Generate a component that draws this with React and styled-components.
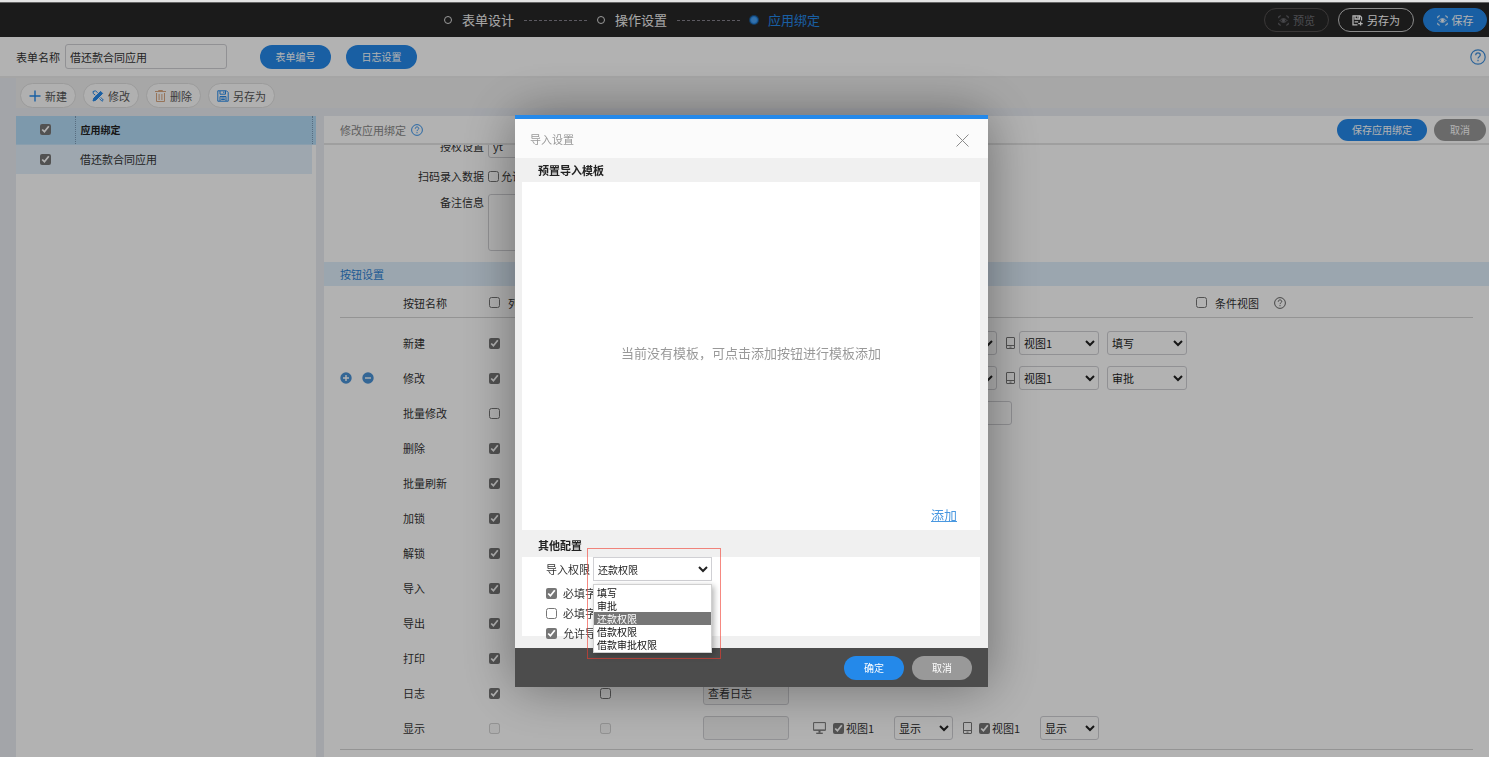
import React from "react";
import styled, { createGlobalStyle, css } from "styled-components";

const buttonRows = [
  { name: "新建", checked: true, views: "填写" },
  { name: "修改", checked: true, views: "审批", tools: true },
  { name: "批量修改", checked: false, wide: true },
  { name: "删除", checked: true },
  { name: "批量刷新", checked: true },
  { name: "加锁", checked: true },
  { name: "解锁", checked: true },
  { name: "导入", checked: true },
  { name: "导出", checked: true },
  { name: "打印", checked: true },
  { name: "日志", checked: true, second: true, title: "查看日志" },
  { name: "显示", checked: false, second: true, title: "", disabled: true, show: true },
];

const authOptions = ["填写", "审批", "还款权限", "借款权限", "借款审批权限"];

export default function App() {
  return (
    <>
      <GlobalStyle />
      <Page>
        <TopStrip />
        <Header>
          <Steps>
            <Step>
              <Dot />
              表单设计
            </Step>
            <Dashes />
            <Step>
              <Dot />
              操作设置
            </Step>
            <Dashes />
            <Step $active>
              <Dot $active />
              应用绑定
            </Step>
          </Steps>
          <HeaderButtons>
            <HeaderButton $width="65px" $kind="dim">
              <FocusIcon />
              预览
            </HeaderButton>
            <HeaderButton $width="76px" $kind="line">
              <SaveAsIcon />
              另存为
            </HeaderButton>
            <HeaderButton $width="64px" $kind="blue">
              <FocusIcon />
              保存
            </HeaderButton>
          </HeaderButtons>
        </Header>

        <FormBar>
          <label htmlFor="form-name">表单名称</label>
          <NameInput id="form-name" defaultValue="借还款合同应用" />
          <Pill $width="71px">表单编号</Pill>
          <Pill $width="71px">日志设置</Pill>
          <BarHelp>
            <HelpIcon size={16} color="#3f8fdc" />
          </BarHelp>
        </FormBar>

        <Toolbar>
          <ToolButton>
            <PlusIcon />
            新建
          </ToolButton>
          <ToolButton>
            <EditIcon />
            修改
          </ToolButton>
          <ToolButton>
            <TrashIcon />
            删除
          </ToolButton>
          <ToolButton>
            <FloppyIcon />
            另存为
          </ToolButton>
        </Toolbar>

        <Main>
          <ListPanel>
            <ListTable>
              <thead>
                <tr>
                  <th>
                    <Check type="checkbox" defaultChecked aria-label="全选" />
                  </th>
                  <th>应用绑定</th>
                  <th></th>
                </tr>
              </thead>
              <tbody>
                <tr>
                  <td>
                    <Check type="checkbox" defaultChecked aria-label="借还款合同应用" />
                  </td>
                  <td>借还款合同应用</td>
                </tr>
              </tbody>
            </ListTable>
          </ListPanel>

          <Detail>
            <DetailHeader>
              <span>修改应用绑定</span>
              <HelpIcon size={12} color="#2489ea" />
              <DetailButtons>
                <Pill $width="90px" $low>
                  保存应用绑定
                </Pill>
                <Pill $width="52px" $low $gray>
                  取消
                </Pill>
              </DetailButtons>
            </DetailHeader>

            <DetailBody>
              <Fields>
                <Field>
                  <label htmlFor="auth">授权设置</label>
                  <TextBox id="auth" $width="240px" defaultValue="yt" />
                </Field>
                <Field>
                  <span>扫码录入数据</span>
                  <CheckLabel>
                    <Check type="checkbox" />
                    允许
                  </CheckLabel>
                </Field>
                <Field $top>
                  <label htmlFor="remark">备注信息</label>
                  <Remark id="remark" />
                </Field>
              </Fields>

              <SectionBar>按钮设置</SectionBar>

              <ButtonTable>
                <colgroup>
                  <Col $width="63px" />
                  <Col $width="86px" />
                  <Col $width="111px" />
                  <Col $width="103px" />
                  <Col $width="110px" />
                  <Col $width="383px" />
                  <Col />
                </colgroup>
                <thead>
                  <tr>
                    <th></th>
                    <th>按钮名称</th>
                    <th>
                      <CheckLabel $wide>
                        <Check type="checkbox" />
                        列表
                      </CheckLabel>
                    </th>
                    <th></th>
                    <th></th>
                    <th></th>
                    <th>
                      <Condition>
                        <CheckLabel $wide>
                          <Check type="checkbox" />
                          条件视图
                        </CheckLabel>
                        <HelpIcon size={12} color="#555" />
                      </Condition>
                    </th>
                  </tr>
                </thead>
                <tbody>
                  {buttonRows.map((row) => (
                    <tr key={row.name}>
                      <td>
                        {row.tools && (
                          <RowTools>
                            <RoundButton aria-label="增加">
                              <RoundIcon plus />
                            </RoundButton>
                            <RoundButton aria-label="移除">
                              <RoundIcon />
                            </RoundButton>
                          </RowTools>
                        )}
                      </td>
                      <td>{row.name}</td>
                      <td>
                        <Check
                          type="checkbox"
                          aria-label={row.name}
                          defaultChecked={row.checked}
                          disabled={row.disabled}
                        />
                      </td>
                      <td>
                        {row.second && (
                          <Check type="checkbox" aria-label={row.name} disabled={row.disabled} />
                        )}
                      </td>
                      <td>
                        {row.second && (
                          <TextBox
                            $width="86px"
                            $off
                            aria-label={row.name}
                            defaultValue={row.title}
                          />
                        )}
                      </td>
                      <td>
                        {row.views && <Views auth={row.views} />}
                        {row.wide && <TextBox $width="199px" aria-label={row.name} />}
                        {row.show && <ShowViews />}
                      </td>
                      <td></td>
                    </tr>
                  ))}
                </tbody>
              </ButtonTable>
            </DetailBody>
          </Detail>
        </Main>
      </Page>

      <Mask>
        <Modal role="dialog" aria-label="导入设置">
          <ModalHeader>
            导入设置
            <CloseButton aria-label="关闭">
              <svg width="13" height="13" viewBox="0 0 13 13" stroke="#8c8c8c" fill="none">
                <path d="M.5 .5l12 12M12.5 .5l-12 12" />
              </svg>
            </CloseButton>
          </ModalHeader>
          <GroupTitle>预置导入模板</GroupTitle>
          <TemplateBox>
            <Empty>当前没有模板，可点击添加按钮进行模板添加</Empty>
            <AddLink href="#add">添加</AddLink>
          </TemplateBox>
          <GroupTitle $tall>其他配置</GroupTitle>
          <ConfigBox>
            <AuthRow>
              <label htmlFor="import-auth">导入权限</label>
              <AuthSelect>
                <Select id="import-auth" $width="119px" $small defaultValue="还款权限">
                  {authOptions.map((o) => (
                    <option key={o}>{o}</option>
                  ))}
                </Select>
                <Marker />
                <Options>
                  {authOptions.map((o) => (
                    <Option key={o} $on={o === "还款权限"}>
                      {o}
                    </Option>
                  ))}
                </Options>
              </AuthSelect>
            </AuthRow>
            <ConfigCheck>
              <Check type="checkbox" defaultChecked />
              必填字
            </ConfigCheck>
            <ConfigCheck>
              <Check type="checkbox" />
              必填字
            </ConfigCheck>
            <ConfigCheck>
              <Check type="checkbox" defaultChecked />
              允许导
            </ConfigCheck>
          </ConfigBox>
          <ModalFooter>
            <Pill $width="60px">确定</Pill>
            <Pill $width="60px" $gray>
              取消
            </Pill>
          </ModalFooter>
        </Modal>
      </Mask>
    </>
  );
}

function Views({ auth }) {
  return (
    <ViewRow>
      <MonitorIcon />
      <Select $width="80px" aria-label="电脑视图" defaultValue="视图1">
        <option>视图1</option>
      </Select>
      <Select $width="80px" aria-label="电脑权限" defaultValue={auth}>
        <option>{auth}</option>
      </Select>
      <PhoneIcon />
      <Select $width="80px" aria-label="手机视图" defaultValue="视图1">
        <option>视图1</option>
      </Select>
      <Select $width="80px" aria-label="手机权限" defaultValue={auth}>
        <option>{auth}</option>
      </Select>
    </ViewRow>
  );
}

function ShowViews() {
  return (
    <ShowRow>
      <MonitorIcon />
      <ShowLabel>
        <Check type="checkbox" defaultChecked />
        视图1
      </ShowLabel>
      <Select $width="59px" aria-label="电脑显示">
        <option>显示</option>
      </Select>
      <PhoneIcon />
      <ShowLabel>
        <Check type="checkbox" defaultChecked />
        视图1
      </ShowLabel>
      <Select $width="59px" aria-label="手机显示">
        <option>显示</option>
      </Select>
    </ShowRow>
  );
}

function HelpIcon({ size, color }) {
  return (
    <svg width={size} height={size} viewBox="0 0 16 16" fill="none" stroke={color} strokeWidth="1.2">
      <circle cx="8" cy="8" r="7.2" />
      <path d="M5.7 6.3c0-1.5 1-2.4 2.3-2.4s2.3.9 2.3 2.1c0 1.6-2.3 1.8-2.3 3.5" />
      <path d="M8 10.8v1.5" />
    </svg>
  );
}

function FocusIcon() {
  return (
    <svg width="11" height="11" viewBox="0 0 11 11" fill="none" stroke="currentColor">
      <path d="M.8 3.2V1.5L2.8 .8M8.2 .8l2 .7v1.7M10.2 7.8v1.7l-2 .7M2.8 10.2l-2-.7V7.8" />
      <path d="M2 5.5c1.8-2.4 5.2-2.4 7 0-1.8 2.4-5.2 2.4-7 0z" />
      <circle cx="5.5" cy="5.5" r="1.2" fill="currentColor" />
    </svg>
  );
}

function SaveAsIcon() {
  return (
    <svg width="11" height="11" viewBox="0 0 11 11" fill="none" stroke="currentColor" strokeWidth="1.3">
      <path d="M5.5 9.8H1V.8h7l1.5 1.4v3.3" />
      <path d="M3 .8v3.2h4.4V.8M5.8 1.2v1.6M2.6 6.8h3.6" />
      <path d="M6.2 8.6h4.5M8.6 6.6v4" />
    </svg>
  );
}

function PlusIcon() {
  return (
    <svg width="12" height="12" viewBox="0 0 12 12" stroke="#2489ea" strokeWidth="1.4">
      <path d="M6 .5v11M.5 6h11" />
    </svg>
  );
}

function EditIcon() {
  return (
    <svg width="12" height="12" viewBox="0 0 12 12" fill="none" stroke="#2489ea">
      <path d="M1 11l.8-2.8L8.6 1.4l2 2L3.8 10.2z" fill="#2489ea" />
      <path d="M1 1.5l2.6-.7 2 2M1 1.5l.3 2 2 1.7M7.5 8.5l2.5 2.8 1.3-1.2-2.6-2.8" />
    </svg>
  );
}

function TrashIcon() {
  return (
    <svg width="11" height="12" viewBox="0 0 11 12" fill="none" stroke="#d8a680">
      <path d="M0 1.5h11M3.5 1.5v-1h4v1M1.5 3v8.5h8V3M4.1 4v6M6.9 4v6" />
    </svg>
  );
}

function FloppyIcon() {
  return (
    <svg width="12" height="12" viewBox="0 0 12 12" fill="none" stroke="#2489ea">
      <path d="M1 .8h8.5L11.2 2.5v8.7H.8V.8z" />
      <path d="M3 1v3.2h5.5V1M6.8 1.5v1.6M3 11V6.5h6V11M4.2 8h3.6M4.2 9.5h3.6" />
    </svg>
  );
}

function RoundIcon({ plus }) {
  return (
    <svg width="12" height="12" viewBox="0 0 12 12">
      <circle cx="6" cy="6" r="5.7" fill="#4a92d6" />
      <path d={plus ? "M3 6h6M6 3v6" : "M3 6h6"} stroke="#fff" strokeWidth="1.4" />
    </svg>
  );
}

function MonitorIcon() {
  return (
    <svg width="13" height="12" viewBox="0 0 13 12" fill="none" stroke="#777">
      <path d="M.6 .6h11.8v7.8H.6z" />
      <path d="M1 7.6h11" stroke="#aaa" />
      <path d="M6.5 8.4v2.4" strokeWidth="2" />
      <path d="M3.2 11.3h6.6" strokeWidth="1.3" />
    </svg>
  );
}

function PhoneIcon() {
  return (
    <svg width="9" height="12" viewBox="0 0 9 12" fill="none" stroke="#777">
      <rect x=".5" y=".5" width="8" height="11" rx=".5" />
      <path d="M.7 8.5h7.6M3.5 10.1h2" />
    </svg>
  );
}

const GlobalStyle = createGlobalStyle`
  * {
    box-sizing: border-box;
  }
  body {
    margin: 0;
    background: #eaedf3;
    font-family: "Noto Sans CJK SC", "Noto Sans", sans-serif;
    font-size: 11px;
    line-height: 16px;
    color: #333;
  }
  button, input, select, textarea {
    font-family: inherit;
    font-size: 11px;
    color: #333;
  }
  svg {
    display: block;
    flex: none;
  }
`;

const Page = styled.div`
  display: flex;
  flex-direction: column;
  height: 100vh;
  overflow: hidden;
`;

const TopStrip = styled.div`
  position: relative;
  z-index: 2;
  flex: none;
  height: 3px;
  background: #e4e4e4;
  border-bottom: 1px solid #666;
`;

const Header = styled.header`
  display: flex;
  flex: none;
  align-items: center;
  height: 34px;
  padding-right: 2px;
  background: #282828;
`;

const Steps = styled.div`
  display: flex;
  flex: 1;
  align-items: center;
  justify-content: center;
  gap: 10px;
`;

const Step = styled.div`
  display: flex;
  align-items: center;
  gap: 10px;
  font-size: 13px;
  line-height: 20px;
  color: ${(p) => (p.$active ? "#2489ea" : "#f0f0f0")};
`;

const Dot = styled.i`
  width: 8px;
  height: 8px;
  border: 1px solid ${(p) => (p.$active ? "#2489ea" : "#ddd")};
  border-radius: 50%;
  background: ${(p) => (p.$active ? "#4ba3f5" : "transparent")};
  box-shadow: ${(p) => (p.$active ? "0 0 0 1px #1c5488" : "none")};
`;

const Dashes = styled.i`
  width: 63px;
  border-top: 1px dashed #84818c;
`;

const HeaderButtons = styled.div`
  display: flex;
  gap: 9px;
`;

const kinds = {
  dim: css`
    border: 1px solid #545050;
    background: transparent;
    color: #6e6e74;
  `,
  line: css`
    border: 1px solid #c8c8c8;
    background: transparent;
    color: #fff;
  `,
  blue: css`
    border: 1px solid #2489ea;
    background: #2489ea;
    color: #fff;
  `,
};

const HeaderButton = styled.button`
  display: flex;
  align-items: center;
  justify-content: center;
  gap: 4px;
  width: ${(p) => p.$width};
  height: 24px;
  padding: 0;
  border-radius: 12px;
  ${(p) => kinds[p.$kind]}
`;

const FormBar = styled.div`
  display: flex;
  flex: none;
  align-items: center;
  height: 41px;
  padding: 0 3px 0 16px;
  background: #fff;
  border-bottom: 2px solid #ececec;

  > button {
    margin-right: 15px;
  }
`;

const inputBorder = css`
  border: 1px solid #d0d0d4;
  border-radius: 3px;
  background: #fff;
`;

const NameInput = styled.input`
  ${inputBorder}
  width: 162px;
  height: 25px;
  margin: 0 33px 0 5px;
  padding: 0 4px;
`;

const Pill = styled.button`
  width: ${(p) => p.$width};
  height: ${(p) => (p.$low ? "22px" : "24px")};
  padding: 0;
  border: 0;
  border-radius: 12px;
  background: ${(p) => (p.$gray ? "#999" : "#2489ea")};
  color: #fff;
  font-size: 10px;
  line-height: 16px;
`;

const BarHelp = styled.span`
  margin-left: auto;
`;

const Toolbar = styled.div`
  display: flex;
  flex: none;
  align-items: flex-end;
  gap: 7px;
  height: 30px;
  margin: 0 0 8px 16px;
  padding-left: 4px;
  background: #f0f0f0;
`;

const ToolButton = styled.button`
  display: flex;
  align-items: center;
  gap: 4px;
  height: 25px;
  padding: 0 8px;
  border: 1px solid #dedede;
  border-radius: 13px;
  background: #fcfcfc;
  color: #555;
`;

const Main = styled.main`
  display: flex;
  flex: 1;
  min-height: 0;
  gap: 8px;
  padding-left: 16px;
`;

const ListPanel = styled.section`
  flex: none;
  width: 300px;
  background: #fff;
`;

const ListTable = styled.table`
  width: 100%;
  table-layout: fixed;
  border-collapse: collapse;

  th, td {
    height: 30px;
    padding: 0 5px;
    text-align: left;
  }
  th {
    height: 28px;
    background: #b4dbf7;
    border-bottom: 1px solid #c4e2f8;
    font-size: 10px;
    color: #222;
  }
  td {
    background: #e2f0fb;
    color: #333;
  }
  th:first-child, td:first-child {
    width: 59px;
    text-align: center;
  }
  th:nth-child(2) {
    border-left: 1px dotted #7e9db8;
    border-right: 1px dotted #7e9db8;
  }
  th:last-child {
    width: 4px;
    padding: 0;
  }
`;

const Check = styled.input`
  display: block;
  flex: none;
  width: 11px;
  height: 11px;
  margin: 0;
  accent-color: #767676;

  ${ListTable} & {
    margin: 0 auto;
  }
`;

const Detail = styled.section`
  display: flex;
  flex: 1;
  flex-direction: column;
  min-width: 0;
  background: #fff;
`;

const DetailHeader = styled.div`
  display: flex;
  flex: none;
  align-items: center;
  gap: 5px;
  height: 29px;
  padding: 0 3px 0 16px;
  border-bottom: 2px solid #e4e4e4;
  color: #888;
`;

const DetailButtons = styled.div`
  display: flex;
  gap: 7px;
  margin-left: auto;
`;

const DetailBody = styled.div`
  flex: 1;
  min-height: 0;
  overflow: hidden;
`;

/* scrolled: the first fields run out above the top edge */
const Fields = styled.div`
  display: flex;
  flex-direction: column;
  justify-content: flex-end;
  gap: 6px;
  height: 117px;
  padding-bottom: 11px;
  overflow: hidden;
`;

const Field = styled.div`
  display: flex;
  flex: none;
  align-items: ${(p) => (p.$top ? "flex-start" : "center")};
  gap: 4px;
  min-height: 24px;

  > :first-child {
    width: 160px;
    text-align: right;
  }
`;

const TextBox = styled.input`
  ${inputBorder}
  display: block;
  width: ${(p) => p.$width};
  height: 24px;
  padding: 0 4px;
  background: ${(p) => (p.$off ? "#f4f4f4" : "#fff")};
`;

const Remark = styled.textarea`
  ${inputBorder}
  width: 240px;
  height: 57px;
  resize: none;
`;

const CheckLabel = styled.label`
  display: flex;
  align-items: center;
  gap: ${(p) => (p.$wide ? "8px" : "2px")};
`;

const SectionBar = styled.div`
  height: 24px;
  padding-left: 16px;
  background: #dfeefb;
  line-height: 24px;
  color: #2f83d3;
`;

const ButtonTable = styled.table`
  width: calc(100% - 32px);
  margin: 0 16px;
  table-layout: fixed;
  border-collapse: collapse;
  border-bottom: 1px solid #d4d4d4;

  th, td {
    height: 35px;
    padding: 0;
    text-align: left;
    font-weight: 400;
  }
  th {
    height: 31px;
    padding-top: 3px;
    border-bottom: 1px solid #d4d4d4;
  }
  tbody::before, tbody::after {
    content: "";
    display: block;
    height: 8px;
  }
  tbody::after {
    height: 3px;
  }
`;

const Col = styled.col`
  width: ${(p) => p.$width || "auto"};
`;

const Condition = styled.div`
  display: flex;
  align-items: center;
  gap: 15px;
`;

const RowTools = styled.div`
  display: flex;
  gap: 10px;
`;

const RoundButton = styled.button`
  padding: 0;
  border: 0;
  background: none;
`;

const Select = styled.select`
  ${inputBorder}
  width: ${(p) => p.$width};
  height: 24px;
  font-size: ${(p) => (p.$small ? "10px" : "11px")};
  color: #222;
`;

const ViewRow = styled.div`
  display: flex;
  align-items: center;
  gap: 8px;

  svg {
    margin-right: -5px;
  }
  select + svg {
    margin: 0 -4px 0 1px;
  }
`;

const ShowRow = styled.div`
  display: flex;
  align-items: center;

  select {
    margin-right: 10px;
  }
`;

const ShowLabel = styled.label`
  display: flex;
  align-items: center;
  gap: 2px;
  width: 68px;
  padding-left: 7px;
`;

const Mask = styled.div`
  position: fixed;
  inset: 0;
  z-index: 1;
  display: flex;
  align-items: flex-start;
  justify-content: center;
  padding: 115px 0 0 14px;
  background: rgba(0, 0, 0, 0.3);
`;

const Modal = styled.div`
  width: 473px;
  border-top: 4px solid #2489ea;
  background: #f0f0f0;
  box-shadow: 0 0 50px rgba(0, 0, 0, 0.4);
`;

const ModalHeader = styled.div`
  display: flex;
  align-items: center;
  justify-content: space-between;
  height: 39px;
  padding: 0 19px 0 15px;
  background: #fbfbfb;
  color: #999;
`;

const CloseButton = styled.button`
  padding: 4px 0 0;
  border: 0;
  background: none;
`;

const GroupTitle = styled.h2`
  height: ${(p) => (p.$tall ? "27px" : "24px")};
  margin: 0;
  padding: ${(p) => (p.$tall ? "3px" : "0")} 23px 0;
  font-size: 11px;
  line-height: 24px;
  font-weight: 700;
  color: #222;
`;

const TemplateBox = styled.div`
  display: flex;
  flex-direction: column;
  height: 348px;
  margin: 0 8px 0 7px;
  padding: 0 23px 5px;
  background: #fff;
  font-size: 13px;
  line-height: 20px;
`;

const Empty = styled.p`
  display: flex;
  flex: 1;
  align-items: center;
  justify-content: center;
  margin: 18px 0 0;
  color: #999;
`;

const AddLink = styled.a`
  align-self: flex-end;
  color: #4a98e0;
`;

const ConfigBox = styled.div`
  height: 79px;
  margin: 0 8px 12px 7px;
  padding-left: 24px;
  background: #fff;
`;

const AuthRow = styled.div`
  display: flex;
  align-items: center;
  gap: 3px;
  height: 24px;
  margin-bottom: 2px;
`;

const AuthSelect = styled.div`
  position: relative;

  select {
    display: block;
    border-radius: 0;
  }
`;

const Marker = styled.div`
  position: absolute;
  z-index: 3;
  top: -9px;
  left: -6px;
  width: 134px;
  height: 111px;
  border: 1px solid rgba(240, 58, 45, 0.6);
  pointer-events: none;
`;

const Options = styled.ul`
  position: absolute;
  z-index: 2;
  top: 27px;
  left: 0;
  width: 119px;
  margin: 0;
  padding: 1px 0;
  border: 1px solid #d0d0d0;
  background: #fff;
  box-shadow: 2px 2px 6px rgba(0, 0, 0, 0.3);
  list-style: none;
`;

const Option = styled.li`
  padding-left: 3px;
  font-size: 10px;
  line-height: 13px;
  background: ${(p) => (p.$on ? "#767676" : "#fff")};
  color: ${(p) => (p.$on ? "#fff" : "#111")};
`;

const ConfigCheck = styled.label`
  display: flex;
  align-items: center;
  gap: 6px;
  height: 20px;
`;

const ModalFooter = styled.div`
  display: flex;
  align-items: center;
  justify-content: flex-end;
  gap: 8px;
  height: 39px;
  padding-right: 16px;
  background: #4c4c4c;
`;
